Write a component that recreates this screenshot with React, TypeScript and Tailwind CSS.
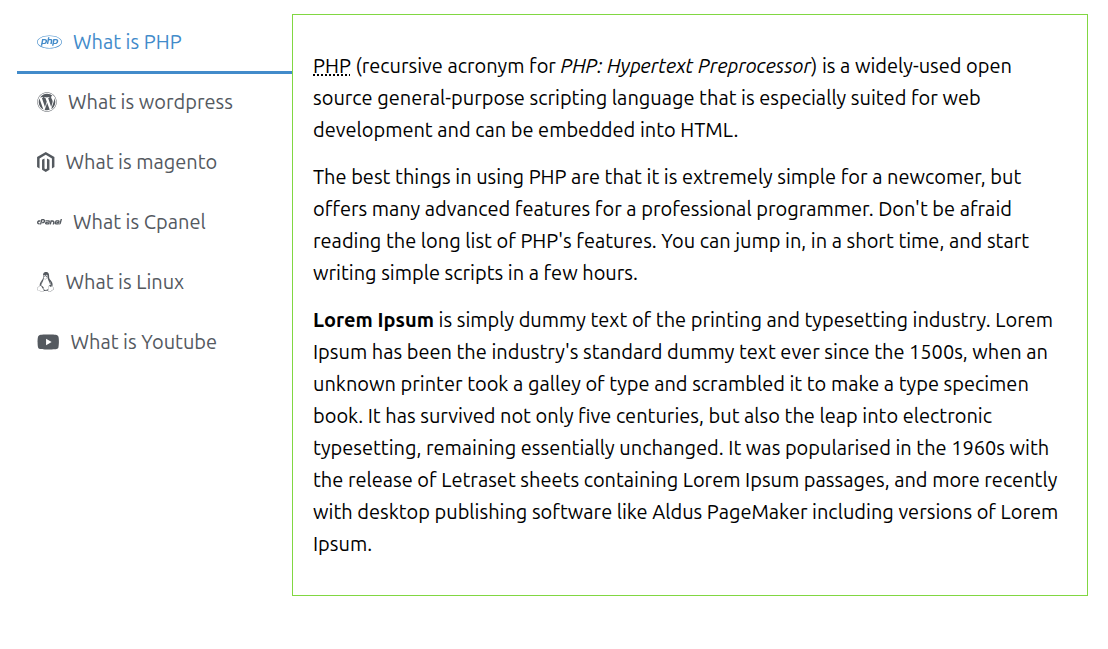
import React from "react";
import { FaWordpress, FaMagento, FaLinux, FaYoutube, FaPhp, FaCpanel } from "react-icons/fa";

const items = [
  { label: "What is PHP", Icon: FaPhp, w: "w-[25px]", active: true },
  { label: "What is wordpress", Icon: FaWordpress, w: "w-[20px]" },
  { label: "What is magento", Icon: FaMagento, w: "w-[17.5px]" },
  { label: "What is Cpanel", Icon: FaCpanel, w: "w-[25px]" },
  { label: "What is Linux", Icon: FaLinux, w: "w-[17.5px]" },
  { label: "What is Youtube", Icon: FaYoutube, w: "w-[22.5px]" },
];

export default function App() {
  return (
    <div className="flex items-start pl-[17px] pr-[20px] pt-[14px] font-['Ubuntu','Noto_Sans',sans-serif] bg-white min-h-[649px]">
      <ul className="w-[275px] shrink-0">
        {items.map(({ label, Icon, w, active }) => (
          <li
            key={label}
            className={`h-[60px] flex items-center gap-[11px] pl-[20px] pb-[1px] text-[20px] border-b-[3px] ${active ? "text-[#428bca] border-[#428bca]" : "text-[#54595f] border-transparent"}`}
          >
            <Icon className={`h-[20px] ${w} shrink-0`} />
            <span>{label}</span>
          </li>
        ))}
      </ul>
      <div className="w-[796px] h-[582px] border border-[#81d742] px-[20px] pt-[35px] text-[20px] leading-[32px] text-black">
        <p className="mb-[15px]">
          <abbr title="PHP: Hypertext Preprocessor" className="underline decoration-dotted decoration-2">PHP</abbr> (recursive acronym for <em>PHP: Hypertext Preprocessor</em>) is a widely-used open source general-purpose scripting language that is especially suited for web development and can be embedded into HTML.
        </p>
        <p className="mb-[15px]">
          The best things in using PHP are that it is extremely simple for a newcomer, but offers many advanced features for a professional programmer. Don't be afraid reading the long list of PHP's features. You can jump in, in a short time, and start writing simple scripts in a few hours.
        </p>
        <p>
          <strong>Lorem Ipsum</strong> is simply dummy text of the printing and typesetting industry. Lorem Ipsum has been the industry's standard dummy text ever since the 1500s, when an unknown printer took a galley of type and scrambled it to make a type specimen book. It has survived not only five centuries, but also the leap into electronic typesetting, remaining essentially unchanged. It was popularised in the 1960s with the release of Letraset sheets containing Lorem Ipsum passages, and more recently with desktop publishing software like Aldus PageMaker including versions of Lorem Ipsum.
        </p>
      </div>
    </div>
  );
}
